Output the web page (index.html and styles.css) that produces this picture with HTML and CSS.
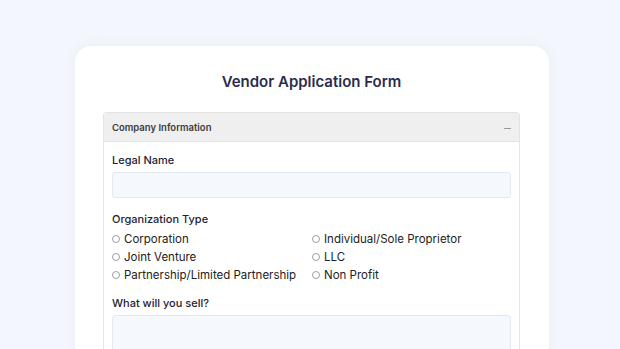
FILE: index.html
```html
<!DOCTYPE html>
<html lang="en">
  <head>
    <meta charset="UTF-8" />
    <meta name="viewport" content="width=device-width, initial-scale=1.0" />
    <title>Vendor Application Form</title>
    <link rel="stylesheet" href="styles.css">
  </head>
  <body>
    <div class="card">
      <h1 class="title">Vendor Application Form</h1>

      <div class="panel">
        <div class="panel-head">
          <span>Company Information</span>
          <span class="toggle"></span>
        </div>
        <div class="panel-body">
          <!-- legal name -->
          <div class="field">
            <label class="field-label" for="legal">Legal Name</label>
            <input id="legal" class="text-input" type="text" />
          </div>

          <!-- org type -->
          <div class="field">
            <span class="field-label">Organization Type</span>
            <div class="radio-grid">
              <label class="radio"><input type="radio" name="org" /> Corporation</label>
              <label class="radio"><input type="radio" name="org" /> Individual/Sole Proprietor</label>
              <label class="radio"><input type="radio" name="org" /> Joint Venture</label>
              <label class="radio"><input type="radio" name="org" /> LLC</label>
              <label class="radio"><input type="radio" name="org" /> Partnership/Limited Partnership</label>
              <label class="radio"><input type="radio" name="org" /> Non Profit</label>
            </div>
          </div>

          <div class="field">
            <label class="field-label" for="sell">What will you sell?</label>
            <textarea id="sell" class="text-area"></textarea>
          </div>
        </div>
      </div>
    </div>
  </body>
</html>
```

FILE: styles.css
```css
* {
  margin: 0;
  padding: 0;
  box-sizing: border-box;
}
body {
  background-color: #f3f6fc;
  font-family: "Inter", "Lato", sans-serif;
  color: #1f2230;
  overflow: hidden;
}
.card {
  width: 474px;
  margin: 46px 0 0 75px;
  padding: 25px 29px 40px 28px;
  background-color: #fff;
  border-radius: 16px;
  box-shadow: 0 0 10px rgba(200, 210, 230, 0.25);
}
.title {
  font-size: 15px;
  font-weight: 600;
  text-align: center;
  color: #2a2c4e;
  line-height: 22px;
  margin-bottom: 19px;
}
/* ===panel=== */
.panel {
  border: 1px solid #e4e4e4;
  border-radius: 3px;
}
.panel-head {
  height: 29px;
  display: flex;
  justify-content: space-between;
  align-items: center;
  padding: 0 8px;
  background-color: #efefef;
  border-bottom: 1px solid #e4e4e4;
  font-size: 9.5px;
  font-weight: 600;
  color: #3c3c3c;
}
.toggle {
  width: 7px;
  height: 1.5px;
  background-color: #999;
  margin-top: 3px;
}
.panel-body {
  padding: 11px 8px 0;
}
/* ========== */
.field {
  margin-bottom: 14px;
}
.field-label {
  display: block;
  font-size: 11px;
  font-weight: 500;
  line-height: 14px;
  margin-bottom: 5px;
}
.text-input,
.text-area {
  display: block;
  width: 100%;
  height: 26px;
  background-color: #f5f9fe;
  border: 1px solid #e1e9f3;
  border-radius: 3px;
}
.text-area {
  height: 60px;
  resize: none;
}
.radio-grid {
  display: grid;
  grid-template-columns: 200px 1fr;
  row-gap: 4px;
  margin-top: 6px;
}
.radio {
  display: flex;
  align-items: center;
  gap: 4px;
  font-size: 11.5px;
  line-height: 14px;
  color: #222;
}
.radio input {
  appearance: none;
  width: 8px;
  height: 8px;
  border: 1px solid #a0a0a0;
  border-radius: 50%;
}
```
